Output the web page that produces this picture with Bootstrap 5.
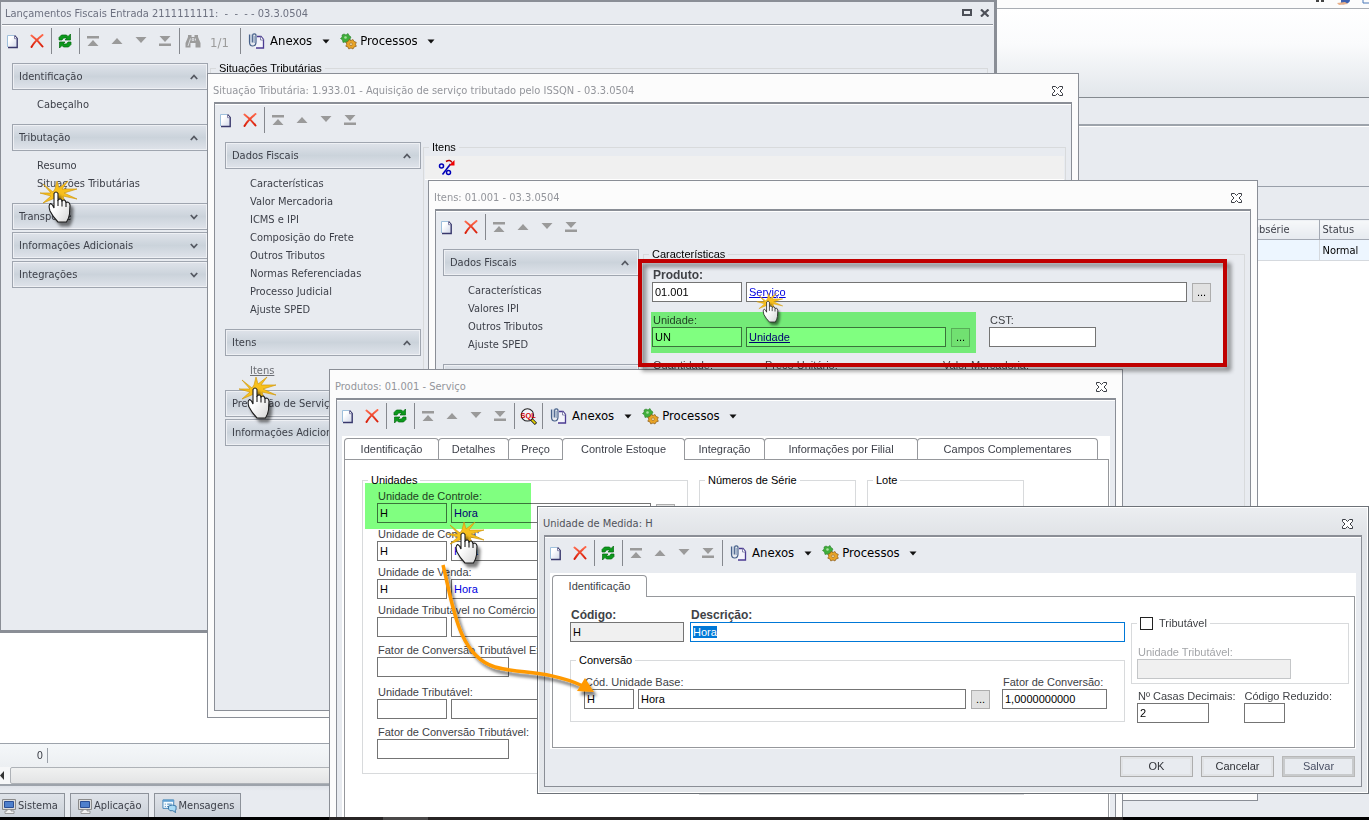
<!DOCTYPE html>
<html lang="pt-BR">
<head>
<meta charset="utf-8">
<meta name="viewport" content="width=device-width, initial-scale=1">
<title>Lançamentos Fiscais</title>
<link href="https://cdn.jsdelivr.net/npm/bootstrap@5.3.0/dist/css/bootstrap.min.css" rel="stylesheet">
<style>
:root{--face:#e8ebf0;--frame:#8a8e96;--ui:"DejaVu Sans Condensed","DejaVu Sans",sans-serif;--form:"Liberation Sans",Arial,sans-serif}
body{font:11px/13px var(--ui);color:#3c3f48;background:#000;overflow:hidden}
button{font:inherit;color:inherit;background:none;border:0;padding:0}
.desk{height:calc(100vh - 3px);overflow:hidden;background:#fff}
.taskline{height:3px;background:linear-gradient(90deg,#000 329px,#272424 329px 383px,#4a4848 383px 428px,#272424 428px 1123px,#000 1123px)}
/* background application */
.app-quick{height:9px;background:#fcfcfc;border-bottom:1px solid #a9adb3}
.app-ribbon{height:89px;background:linear-gradient(#fff,#fafbfc 40%,#e2e6eb);border-bottom:1px solid #858a90}
.app-caption{height:28px;background:var(--face);border-bottom:2px solid #9da3ab;margin-bottom:1px}
.app-band{height:60px;background:var(--face);border-bottom:1px solid #999fa9}
.app-band2{height:32px;background:var(--face)}
.grid-tbl{table-layout:fixed;border-collapse:collapse}
.grid-tbl th,.grid-tbl td{height:20px;padding:0 3px;border:1px solid #a3a9b3;border-width:1px 0 1px 1px;font-weight:400;white-space:nowrap}
.grid-tbl th{background:linear-gradient(#f6f8fa,#e6eaef)}
.grid-tbl td{height:21px;background:#edf6ff;border-color:#d5d9de;color:#000}
.c-sub{width:76px}.c-sta{width:50px}
.app-count{height:24px;border-top:1px solid #9da3ab;background:linear-gradient(#f4f7f9,#eceff2)}
.app-count span{width:48px;height:15px;border-right:1px solid #9aa0a8;padding-right:4px;line-height:16px}
.app-scroll{height:17px;background:#f6f7f8}
.app-scroll .thumb{border:1px solid #aeb2b7;border-radius:2px;background:linear-gradient(#f0f1f1,#e3e4e5)}
.app-tabs{height:33px;gap:5px;border-top:2px solid #9da3ab;background:linear-gradient(#dfe3e9,var(--face) 5px);padding-top:7px}
.app-tabs button{height:24px;gap:2px;border:1px solid #8d929a;border-bottom:0;background:linear-gradient(#dfe3e9,#cbd1d9);padding:0 6px 0 7px}
.app-tabs button:first-child{border-left:0;padding-left:2px}
/* windows */
.win{position:absolute;border:1px solid var(--frame);background:#fcfcfc;padding:0 6px 6px}
.win-title{height:28px;flex:none;color:#93959b;margin-left:-1px;padding:5px 9px 0 0;white-space:nowrap}
.win-body{border:1px solid var(--frame);border-top-width:2px;background:var(--face);box-shadow:inset 0 1px #fff;padding-top:1px;min-height:0;flex:1;overflow:hidden}
.w1{left:0;right:372px;top:0;bottom:184px;border-width:2px 3px 3px 1px;background:var(--face);padding:0}
.w1 .win-title{height:22px;margin:0;color:#6d7180;padding:0 0 0 4px}
.w1 .win-body{border:0;border-top:1px solid #90959d;margin-left:1px;margin-right:1px}
.w2{left:207px;right:290px;top:73px;bottom:99px}
.w3{left:428px;right:111px;top:180px;bottom:16px}
.w4{left:329px;right:246px;top:369px;bottom:0;border-bottom:0;padding-bottom:0}
.w4 .win-body{border-bottom:0}
.w5{left:537px;right:0;top:506px;background:linear-gradient(#eceef1,#e0e3e7 28px,#e5e8ec);border-color:#6d7278;box-shadow:inset 0 0 0 1px #fff}
.w5 .win-title{color:#50525a}
/* toolbar */
.tools{height:30px;padding-top:2px}
.tools>button{width:24px;height:26px;display:flex;align-items:center;justify-content:center}
.tools>button:first-child{width:23px}
.tools>i{width:1px;height:26px;margin:0 1px 0 2px;background:#85888e}
.tools>span{width:33px;padding-left:5px;font-size:13px;color:#9c9c9c}
.tools>button.menu{width:auto;font-size:13px;line-height:16px;color:#000;padding-left:6px;padding-right:4px}
.menu svg:first-child{margin-right:5px}.menu svg:last-child{margin-left:10px}
.menu+.menu svg:first-child{margin-right:3px}.menu+.menu svg:last-child{margin-left:9px}
/* side navigation */
.side{width:196px;flex:none;margin-top:1px;font-family:var(--ui)}
.side>button{height:27px;width:100%;border:1px solid #9fa5af;box-shadow:inset 0 0 0 1px #eef0f4;background:linear-gradient(#dfe3ea,#cbd3db 50%,#dfe3ea);padding:0 9px 0 6px;margin-bottom:2px;display:flex;align-items:center;justify-content:space-between}
.side ul{margin:6px 0 10px;padding:0 0 0 25px;list-style:none}
.side a{display:block;line-height:18px;color:#3c3f48;text-decoration:none}
.side a.here{text-decoration:underline;color:#6c6e74}
.b2{padding:6px 5px 0 10px;gap:2px}.b3{padding:6px 5px 0 7px}
.strip{height:24px;background:#f0f0f0;border-bottom:1px solid #fff;margin:2px 1px 0;padding-left:13px}
.list-box{border-left:1px solid #000;margin:33px 4px 0}
/* forms */
.frm{font-family:var(--form)}
.frm fieldset{border:1px solid #d8dadc;padding:0}
.frm legend{float:none;width:auto;margin:0 0 0 5px;padding:0 3px;font-size:11px;line-height:13px;color:#000}
.frm label{display:block;line-height:13px;white-space:nowrap;padding-left:1px;color:#404246}
.frm input[type=text]{display:block;height:20px;width:100%;border:1px solid #747474;border-radius:0;background:#fff;padding:0 2px;font:11px/18px var(--form);color:#000;outline:0}
.frm input.lnk{color:#0000e0}.frm input.und{text-decoration:underline}
.frm input[readonly].off{background:#f0f0f0}
.frm input:disabled{background:#f0f0f0;border-color:#c4c6c8}
.frm b{font-size:12px}
.dots{width:19px;height:19px;flex:none;border:1px solid #adadad;background:#e1e1e1;line-height:15px;color:#000;margin:1px 0 0 1px}
.gp4{gap:4px}.k90{width:90px;flex:none}.k200{width:200px;flex:none}.k107{width:107px;flex:none}.k112{width:112px}.k178{width:178px}.k70{width:70px;flex:none}.k132{width:132px}.k50{width:50px;flex:none}.k114{width:114px;flex:none}.k72{width:72px}.k41{width:41px}
.cst{margin-left:19px}
.mark-green{position:absolute;background:#80ff80;mix-blend-mode:multiply}
.mg-a{left:-1px;top:-2px;width:325px;height:41px}
.mg-b{left:2px;top:-4px;width:166px;height:46px}
.frm .char{padding:8px 33px 0 8px;margin-left:4px}
.char>legend{margin-left:-3px}
.tabbed{background:#fff;padding:2px 1px 1px 2px;margin:5px 5px 0}
.w4 .tabbed{padding-bottom:0}
.tab-row{height:22px;position:relative;margin-bottom:-1px;z-index:1}
.tab-row button{height:21px;border:1px solid #96989c;border-bottom:0;border-radius:4px 4px 0 0;margin-right:-1px;background:#fff;color:#3c3f48;white-space:nowrap}
.tab-row .on{height:22px}
.tab-pg{border:1px solid #96989c;background:#fff}
.pg4{padding:14px 16px 0 17px;gap:11px;border-bottom:0}
.pg5{padding:12px 5px 24px 17px;gap:6px}
.t94{width:95px}.t71{width:71px}.t55{width:55px}.t123{width:123px}.t81{width:81px}.t154{width:154px}.t181{width:181px}
.frm .uni{width:326px;flex:none;padding:0 10px 14px 14px}
.frm .uni>legend{margin-left:-9px}
.uni .frow{margin-bottom:5px}.uni .frow:first-of-type{padding-top:3px}.uni .g7{margin-bottom:7px}.uni .g9{margin-bottom:9px}
.box156{width:157px;height:50px}.box-low{height:271px}
.act{padding:7px 6px 9px}
.act button{width:73px;height:21px;border:1px solid #adadad;box-shadow:inset 0 0 0 2px #e1e3e6;background:#e8ebf0;font-family:var(--form);margin-left:8px;color:#303238}
.act button.def{border-color:#b8b8b8;box-shadow:inset 0 0 0 2px #c8cacc;color:#4a5064}
.frm .conv{padding:9px 17px 12px 13px}
.conv>legend{margin-left:-8px}
.fator{width:105px;flex:none;margin-left:12px}
.frm .trib{padding:16px 57px 4px 5px}
.trib>legend{margin-left:0}
.frm .dim{color:#a3a5a8}
.rcol{width:218px;flex:none;margin-top:8px}
.rrow{margin:6px 0 0 6px;gap:8px}
.frm input[type=checkbox]{appearance:none;width:13px;height:13px;border:1px solid #222;background:#fff;margin:0 6px 0 0}
#desc{border-color:#0078d7}
#desc::selection{background:#0078d7;color:#fff}
.red-mark{position:absolute;left:638px;right:142px;top:259px;height:108px;border:4px solid #c00000;filter:drop-shadow(4px 4px 2px rgba(0,0,0,.45));pointer-events:none}
.notes{position:absolute;left:0;top:0;width:100%;height:100%;pointer-events:none}
</style>
</head>
<body>
<svg width="0" height="0" class="position-absolute">
<defs>
<linearGradient id="gp" x1="0" y1="0" x2="1" y2="1"><stop offset=".3" stop-color="#fff"/><stop offset="1" stop-color="#cfd6e8"/></linearGradient>
<linearGradient id="gh" x1="0" y1="0" x2="1" y2="1"><stop offset=".4" stop-color="#fff"/><stop offset="1" stop-color="#d4d4d4"/></linearGradient>
<linearGradient id="gx" x1="0" y1="0" x2="0" y2="1"><stop offset="0" stop-color="#ff6a4c"/><stop offset="1" stop-color="#d81c08"/></linearGradient>
<filter id="sh" x="-50%" y="-50%" width="220%" height="220%"><feDropShadow dx="3" dy="4" stdDeviation="1.6" flood-opacity=".5"/></filter>
<symbol id="doc" viewBox="1 0 14 16"><path d="M1.500 2.500h6.500l3 3v9h-9.500z" fill="url(#gp)"/><path d="M1.500 14V2.500h6.500" fill="none" stroke="#9fc0dc"/><path d="M8.500 2.500l2.700 3V14.500H2" fill="none" stroke="#38386c" stroke-width="1.400"/><path d="M8.500 3v2.700h2.500" fill="#fff" stroke="#6a6a98" stroke-width=".8"/></symbol>
<symbol id="del" viewBox="0 0 14 14"><path d="M1.500 1.500C5 4 9 8 12.500 12.500M12.500 1C8 4.500 4 8.500 1.500 13" fill="none" stroke="url(#gx)" stroke-width="2" stroke-linecap="round"/></symbol>
<symbol id="ref" viewBox="0 0 14 16"><path d="M1 7V4.500L3.500 2h5L10 3.500 12.500 1v6H7l2-2H5.500L4 7z" fill="#0c9a1c" stroke="#056810" stroke-width=".7"/><path d="M13 9v2.500L10.500 14h-5L4 12.500 1.500 15V9H7l-2 2h3.500L10 9z" fill="#0c9a1c" stroke="#056810" stroke-width=".7"/></symbol>
<symbol id="fst" viewBox="0 0 12 12"><path d="M0 1h12v2.500H0zM6 5l5.500 6H.5z" fill="#9a9a9a"/></symbol>
<symbol id="up" viewBox="0 0 12 12"><path d="M6 3l5.500 6H.5z" fill="#9a9a9a"/></symbol>
<symbol id="dn" viewBox="0 0 12 12"><path d="M6 8L.5 2h11z" fill="#9a9a9a"/></symbol>
<symbol id="lst" viewBox="0 0 12 12"><path d="M0 8.500h12V11H0zM6 7L.5 1h11z" fill="#9a9a9a"/></symbol>
<symbol id="bin" viewBox="0 0 16 14"><path d="M3 1h3.500v2h3V1H13v2l2.500 6v4.500h-5V9h-5v4.500H.500V9L3 3z" fill="#9c9c9c"/><path d="M5.500 4.500L3 12M10.500 4.500v2M7.200 4.500h1.600v2H7.200z" stroke="#e8ebf0" stroke-width=".8" fill="none"/></symbol>
<symbol id="clip" viewBox="0 0 17 16"><path d="M8 3.500h5l2.500 3v8.500H7z" fill="#f4f4fb"/><path d="M9 3.500h4l2.500 3V15H8" fill="none" stroke="#4b3b92" stroke-width="1.300"/><path d="M12.500 3.500V7h3" fill="#fff" stroke="#6a6a98" stroke-width=".8"/><path d="M1.500 1.500v7.500q0 4 3.200 4t3.300-4V2.500Q8 .8 6.300.8T4.700 2.500v7" fill="none" stroke="#47618a" stroke-width="1.200"/><path d="M3.100 1.500v8M6.300 3v7" stroke="#8aa0c0" stroke-width=".9"/></symbol>
<symbol id="gear" viewBox="0 0 17 17"><path d="M4 1l2 1 2-1.500 1 2L11 4l-1 2 .5 2-2 .500L7 10 5 9 3 9.500 2.500 7 .5 5.500 2.200 4 2 2z" fill="#3fae3a" stroke="#2c7e2c" stroke-width=".6"/><circle cx="5.500" cy="4.500" r="1.300" fill="#a8e0a0"/><path d="M9 6.500l2 1 2-1 1 2 2.300.8-.8 2 .8 2-2.300.700-1 2-2-1-2.200 1L8 14l-2.200-.8 1-2-.8-2L8 8.500z" fill="#e9a426" stroke="#8a5a18" stroke-width=".7"/><circle cx="11" cy="11.200" r="1.400" fill="#f0d8a0" stroke="#8a5410" stroke-width=".5"/></symbol>
<symbol id="car" viewBox="0 0 8 5"><path d="M.5.5h7L4 4.500z" fill="#111"/></symbol>
<symbol id="sql" viewBox="0 0 16 16"><path d="M10 10l5 5" stroke="#222" stroke-width="3"/><path d="M11 11l3.500 3.500" stroke="#e8d400" stroke-width="1.500"/><circle cx="7" cy="6.500" r="5.800" fill="#f2f4fa" stroke="#222"/><text x="0.500" y="9" font-family="Liberation Sans" font-size="7" font-weight="700" fill="#d00000">SQL</text></symbol>
<symbol id="chu" viewBox="0 0 8 6"><path d="M.8 5L4 1.500 7.200 5" fill="none" stroke="#555962" stroke-width="1.800"/></symbol>
<symbol id="chd" viewBox="0 0 8 6"><path d="M.8 1L4 4.500 7.200 1" fill="none" stroke="#555962" stroke-width="1.800"/></symbol>
<symbol id="cls" viewBox="0 0 11 10"><path d="M.5.5h3l2 2L7.500.5h3v2L8 5l2.500 2.500v2h-3l-2-2-2 2h-3v-2L3 5 .5 2.500z" fill="#fff" stroke="#3a3d44" stroke-width="1"/></symbol>
<symbol id="pct" viewBox="0 0 17 17"><path d="M12.500 5L4.500 15.500" stroke="#0000b8" stroke-width="1.600"/><circle cx="3.500" cy="7" r="2" fill="none" stroke="#0000b8" stroke-width="1.500"/><circle cx="10.500" cy="13.500" r="2" fill="none" stroke="#0000b8" stroke-width="1.500"/><path d="M8 2.500q4-2.500 6 1" fill="none" stroke="#b00000" stroke-width="1.500"/><path d="M16.500 1v5.500H11z" fill="#f00000"/></symbol>
<symbol id="pc" viewBox="0 0 14 16"><path d="M.5 1.500h13v10H.5z" fill="#dcdcdc" stroke="#8a8a8a"/><path d="M2.500 3.500h9V9.500h-9z" fill="#4f80cc" stroke="#2b4f94"/><path d="M5 11.500h4V13h3v2.500H3V13h2z" fill="#f0f0f0" stroke="#888" stroke-width=".8"/></symbol>
<symbol id="msg" viewBox="0 0 16 16"><path d="M1 1.500h11.500v9H1z" fill="#f4fbff" stroke="#3b7fb5"/><path d="M1 1.500h11.500v2H1z" fill="#5fa0d2"/><path d="M3 6h1M5.500 6h5M3 8.500h1M5.500 8.500h3" stroke="#3b7fb5"/><path d="M7 8q4-2 8 0v4l-1 .5.500 2.500-3-2h-3Q6 12 7 8z" fill="#a9dbf5" stroke="#2c6a9c" stroke-width=".9"/></symbol>
<g id="hand">
<path d="M-1-3L1-11l2 7 9-7-6 8 15 0-13 4 13 6-14-3 3 9-7-7-5 9 1-9-12 5 8-7-11-3 11 0-8-9 10 8z" fill="#f8c01c" stroke="#d09a10" stroke-width=".7"/>
<path filter="url(#sh)" d="M-2 1.500Q0-1.500 2 1.500V8Q5 5.500 6 9 9 6.500 10 10.500 13 9 14 13L13.500 22Q13 26 10.500 30H2Q-3 25-6 19-8 13-5.500 11.500-3.500 12-2 16z" fill="url(#gh)" stroke="#1c1c1c" stroke-width="1.100"/>
<path d="M2 8v6M6 9v5.500M10 10.500V15" stroke="#1c1c1c" stroke-width="1.100" fill="none"/>
</g>
</defs>
</svg>

<main class="desk position-relative">
<div class="h-100 d-flex flex-column">
  <div class="app-quick flex-shrink-0 d-flex justify-content-end"><svg width="60" height="5"><path d="M7 0h3v2H7zM12 0h3v2h-3z" fill="#444"/><path d="M32 0h9q0 3-5 4t-4-2z" fill="#3f62b0"/><path d="M28 3l8-1 3 2-9 1z" fill="#e8b08a"/><path d="M54 0v3h6" stroke="#4a78b8" fill="none"/></svg></div>
  <div class="app-ribbon flex-shrink-0"></div>
  <div class="app-caption flex-shrink-0"></div>
  <div class="app-band flex-shrink-0"></div>
  <div class="app-band2 flex-shrink-0"></div>
  <div class="flex-grow-1">
    <table class="grid-tbl w-100"><colgroup><col><col class="c-sub"><col class="c-sta"></colgroup>
    <thead><tr><th></th><th>Subsérie</th><th>Status</th></tr></thead><tbody><tr><td></td><td></td><td>Normal</td></tr></tbody></table>
  </div>
  <div class="app-count flex-shrink-0 d-flex align-items-center"><span class="text-end">0</span></div>
  <div class="app-scroll flex-shrink-0 d-flex"><svg width="10" height="17"><path d="M4 4v9L0 8.500z" fill="#333"/></svg><div class="thumb flex-grow-1 my-0"></div></div>
  <nav class="app-tabs flex-shrink-0 d-flex">
    <button class="d-flex align-items-center"><svg width="14" height="16"><use href="#pc"/></svg>Sistema</button>
    <button class="d-flex align-items-center"><svg width="14" height="16"><use href="#pc"/></svg>Aplicação</button>
    <button class="d-flex align-items-center"><svg width="15" height="16"><use href="#msg"/></svg>Mensagens</button>
  </nav>
</div>

<section class="win w1 d-flex flex-column">
  <header class="win-title d-flex align-items-center justify-content-between"><span>Lançamentos Fiscais Entrada 2111111111: &nbsp;- &nbsp;- &nbsp;- - 03.3.0504</span>
    <span class="d-flex align-items-center"><button class="d-flex me-2" aria-label="Maximizar"><svg width="10" height="8"><path d="M1 1h8v5H1z" fill="none" stroke="#4d5058" stroke-width="2"/></svg></button><button class="d-flex me-1" aria-label="Fechar"><svg width="10" height="8"><path d="M1 .5l7.500 7M8.500.5L1 7.500" stroke="#4d5058" stroke-width="2.200"/></svg></button></span></header>
  <div class="win-body">
    <div class="tools d-flex">
      <button aria-label="Novo"><svg width="14" height="16"><use href="#doc"/></svg></button><button aria-label="Excluir"><svg width="14" height="14"><use href="#del"/></svg></button><i></i>
      <button aria-label="Atualizar"><svg width="14" height="16"><use href="#ref"/></svg></button><i></i>
      <button aria-label="Primeiro"><svg width="12" height="12"><use href="#fst"/></svg></button><button aria-label="Anterior"><svg width="12" height="12"><use href="#up"/></svg></button><button aria-label="Próximo"><svg width="12" height="12"><use href="#dn"/></svg></button><button aria-label="Último"><svg width="12" height="12"><use href="#lst"/></svg></button><i></i>
      <button aria-label="Localizar"><svg width="16" height="14"><use href="#bin"/></svg></button><span class="align-self-center">1/1</span><i></i>
      <button class="menu"><svg width="17" height="16"><use href="#clip"/></svg>Anexos<svg width="8" height="5"><use href="#car"/></svg></button>
      <button class="menu"><svg width="17" height="17"><use href="#gear"/></svg>Processos<svg width="8" height="5"><use href="#car"/></svg></button>
    </div>
    <div class="b2 d-flex frm h-100">
      <nav class="side">
        <button>Identificação<svg width="8" height="6"><use href="#chu"/></svg></button>
        <ul><li><a href="#">Cabeçalho</a></li></ul>
        <button>Tributação<svg width="8" height="6"><use href="#chu"/></svg></button>
        <ul><li><a href="#">Resumo</a></li><li><a href="#">Situações Tributárias</a></li></ul>
        <button>Transporte<svg width="8" height="6"><use href="#chd"/></svg></button>
        <button>Informações Adicionais<svg width="8" height="6"><use href="#chd"/></svg></button>
        <button>Integrações<svg width="8" height="6"><use href="#chd"/></svg></button>
      </nav>
      <fieldset class="flex-grow-1"><legend>Situações Tributárias</legend></fieldset>
    </div>
  </div>
</section>

<section class="win w2 d-flex flex-column">
  <header class="win-title d-flex align-items-center justify-content-between"><span>Situação Tributária: 1.933.01 - Aquisição de serviço tributado pelo ISSQN - 03.3.0504</span><button class="d-flex" aria-label="Fechar"><svg width="11" height="10"><use href="#cls"/></svg></button></header>
  <div class="win-body d-flex flex-column">
    <div class="tools d-flex">
      <button aria-label="Novo"><svg width="14" height="16"><use href="#doc"/></svg></button><button aria-label="Excluir"><svg width="14" height="14"><use href="#del"/></svg></button><i></i>
      <button aria-label="Primeiro"><svg width="12" height="12"><use href="#fst"/></svg></button><button aria-label="Anterior"><svg width="12" height="12"><use href="#up"/></svg></button><button aria-label="Próximo"><svg width="12" height="12"><use href="#dn"/></svg></button><button aria-label="Último"><svg width="12" height="12"><use href="#lst"/></svg></button>
    </div>
    <div class="b2 d-flex frm flex-grow-1">
      <nav class="side">
        <button>Dados Fiscais<svg width="8" height="6"><use href="#chu"/></svg></button>
        <ul><li><a href="#">Características</a></li><li><a href="#">Valor Mercadoria</a></li><li><a href="#">ICMS e IPI</a></li><li><a href="#">Composição do Frete</a></li><li><a href="#">Outros Tributos</a></li><li><a href="#">Normas Referenciadas</a></li><li><a href="#">Processo Judicial</a></li><li><a href="#">Ajuste SPED</a></li></ul>
        <button>Itens<svg width="8" height="6"><use href="#chu"/></svg></button>
        <ul><li><a href="#" class="here">Itens</a></li></ul>
        <button>Prestação de Serviço<svg width="8" height="6"><use href="#chd"/></svg></button>
        <button>Informações Adicionais<svg width="8" height="6"><use href="#chd"/></svg></button>
      </nav>
      <fieldset class="flex-grow-1 d-flex flex-column"><legend>Itens</legend>
        <div class="strip d-flex align-items-center"><svg width="17" height="17"><use href="#pct"/></svg></div>
        <div class="list-box flex-grow-1"></div>
      </fieldset>
    </div>
  </div>
</section>

<section class="win w3 d-flex flex-column">
  <header class="win-title d-flex align-items-center justify-content-between"><span>Itens: 01.001 - 03.3.0504</span><button class="d-flex" aria-label="Fechar"><svg width="11" height="10"><use href="#cls"/></svg></button></header>
  <div class="win-body d-flex flex-column">
    <div class="tools d-flex">
      <button aria-label="Novo"><svg width="14" height="16"><use href="#doc"/></svg></button><button aria-label="Excluir"><svg width="14" height="14"><use href="#del"/></svg></button><i></i>
      <button aria-label="Primeiro"><svg width="12" height="12"><use href="#fst"/></svg></button><button aria-label="Anterior"><svg width="12" height="12"><use href="#up"/></svg></button><button aria-label="Próximo"><svg width="12" height="12"><use href="#dn"/></svg></button><button aria-label="Último"><svg width="12" height="12"><use href="#lst"/></svg></button>
    </div>
    <div class="b3 d-flex frm flex-grow-1">
      <nav class="side">
        <button>Dados Fiscais<svg width="8" height="6"><use href="#chu"/></svg></button>
        <ul><li><a href="#">Características</a></li><li><a href="#">Valores IPI</a></li><li><a href="#">Outros Tributos</a></li><li><a href="#">Ajuste SPED</a></li></ul>
        <button>&nbsp;</button>
      </nav>
      <fieldset class="flex-grow-1 char"><legend>Características</legend>
        <label for="prod"><b>Produto:</b></label>
        <div class="d-flex gp4 mb-2 pb-1"><div class="k90"><input type="text" id="prod" value="01.001"></div><input type="text" class="lnk und" value="Serviço" aria-label="Nome do produto"><button class="dots">...</button></div>
        <div class="d-flex position-relative mb-2 pb-1">
          <div><label for="un">Unidade:</label><div class="d-flex gp4"><div class="k90"><input type="text" id="un" value="UN"></div><div class="k200"><input type="text" class="lnk und" value="Unidade" aria-label="Nome da unidade"></div><button class="dots">...</button></div></div>
          <div class="k107 cst"><label for="cst">CST:</label><input type="text" id="cst"></div>
          <div class="mark-green mg-a"></div>
        </div>
        <div class="d-flex"><label class="k112">Quantidade:</label><label class="k178">Preço Unitário:</label><label>Valor Mercadoria:</label></div>
      </fieldset>
    </div>
  </div>
</section>

<section class="win w4 d-flex flex-column">
  <header class="win-title d-flex align-items-center justify-content-between"><span>Produtos: 01.001 - Serviço</span><button class="d-flex" aria-label="Fechar"><svg width="11" height="10"><use href="#cls"/></svg></button></header>
  <div class="win-body d-flex flex-column">
    <div class="tools d-flex">
      <button aria-label="Novo"><svg width="14" height="16"><use href="#doc"/></svg></button><button aria-label="Excluir"><svg width="14" height="14"><use href="#del"/></svg></button><i></i>
      <button aria-label="Atualizar"><svg width="14" height="16"><use href="#ref"/></svg></button><i></i>
      <button aria-label="Primeiro"><svg width="12" height="12"><use href="#fst"/></svg></button><button aria-label="Anterior"><svg width="12" height="12"><use href="#up"/></svg></button><button aria-label="Próximo"><svg width="12" height="12"><use href="#dn"/></svg></button><button aria-label="Último"><svg width="12" height="12"><use href="#lst"/></svg></button><i></i>
      <button aria-label="SQL"><svg width="17" height="17"><use href="#sql"/></svg></button><i></i>
      <button class="menu"><svg width="17" height="16"><use href="#clip"/></svg>Anexos<svg width="8" height="5"><use href="#car"/></svg></button>
      <button class="menu"><svg width="17" height="17"><use href="#gear"/></svg>Processos<svg width="8" height="5"><use href="#car"/></svg></button>
    </div>
    <div class="tabbed frm flex-grow-1 d-flex flex-column">
      <div class="tab-row d-flex align-items-start"><button class="t94">Identificação</button><button class="t71">Detalhes</button><button class="t55">Preço</button><button class="t123 on">Controle Estoque</button><button class="t81">Integração</button><button class="t154">Informações por Filial</button><button class="t181">Campos Complementares</button></div>
      <div class="tab-pg pg4 flex-grow-1 d-flex align-items-start">
        <fieldset class="uni position-relative"><legend>Unidades</legend>
          <div class="frow"><label for="uc">Unidade de Controle:</label><div class="d-flex gp4"><div class="k70"><input type="text" id="uc" value="H"></div><div class="k200"><input type="text" class="lnk" value="Hora" aria-label="Nome"></div><button class="dots">...</button></div></div>
          <div class="frow"><label for="up1">Unidade de Compra:</label><div class="d-flex gp4"><div class="k70"><input type="text" id="up1" value="H"></div><div class="k200"><input type="text" class="lnk" value="Hora" aria-label="Nome"></div></div></div>
          <div class="frow"><label for="uv">Unidade de Venda:</label><div class="d-flex gp4"><div class="k70"><input type="text" id="uv" value="H"></div><div class="k200"><input type="text" class="lnk" value="Hora" aria-label="Nome"></div></div></div>
          <div class="frow g7"><label for="ue">Unidade Tributável no Comércio E</label><div class="d-flex gp4"><div class="k70"><input type="text" id="ue"></div><div class="k200"><input type="text" aria-label="Nome"></div></div></div>
          <div class="frow g9"><label for="fe">Fator de Conversão Tributável Ext</label><div class="k132"><input type="text" id="fe"></div></div>
          <div class="frow g7"><label for="ut">Unidade Tributável:</label><div class="d-flex gp4"><div class="k70"><input type="text" id="ut"></div><div class="k200"><input type="text" aria-label="Nome"></div></div></div>
          <div><label for="ft">Fator de Conversão Tributável:</label><div class="k132"><input type="text" id="ft"></div></div>
          <div class="mark-green mg-b"></div>
        </fieldset>
        <div class="d-flex flex-column"><div class="d-flex" style="gap:11px"><fieldset class="box156"><legend>Números de Série</legend></fieldset><fieldset class="box156"><legend>Lote</legend></fieldset></div>
        <fieldset class="box-low"></fieldset></div>
      </div>
    </div>
  </div>
</section>

<section class="win w5 d-flex flex-column">
  <header class="win-title d-flex align-items-center justify-content-between"><span>Unidade de Medida: H</span><button class="d-flex" aria-label="Fechar"><svg width="11" height="10"><use href="#cls"/></svg></button></header>
  <div class="win-body">
    <div class="tools d-flex">
      <button aria-label="Novo"><svg width="14" height="16"><use href="#doc"/></svg></button><button aria-label="Excluir"><svg width="14" height="14"><use href="#del"/></svg></button><i></i>
      <button aria-label="Atualizar"><svg width="14" height="16"><use href="#ref"/></svg></button><i></i>
      <button aria-label="Primeiro"><svg width="12" height="12"><use href="#fst"/></svg></button><button aria-label="Anterior"><svg width="12" height="12"><use href="#up"/></svg></button><button aria-label="Próximo"><svg width="12" height="12"><use href="#dn"/></svg></button><button aria-label="Último"><svg width="12" height="12"><use href="#lst"/></svg></button><i></i>
      <button class="menu"><svg width="17" height="16"><use href="#clip"/></svg>Anexos<svg width="8" height="5"><use href="#car"/></svg></button>
      <button class="menu"><svg width="17" height="17"><use href="#gear"/></svg>Processos<svg width="8" height="5"><use href="#car"/></svg></button>
    </div>
    <div class="tabbed frm">
      <div class="tab-row d-flex align-items-start"><button class="t94 on">Identificação</button></div>
      <div class="tab-pg pg5 d-flex">
        <div class="flex-grow-1">
          <div class="d-flex mb-2 pb-1" style="gap:6px">
            <div class="k114"><label for="cod"><b>Código:</b></label><input type="text" class="off" id="cod" value="H" readonly></div>
            <div class="flex-grow-1"><label for="desc"><b>Descrição:</b></label><input type="text" id="desc" value="Hora"></div>
          </div>
          <fieldset class="conv"><legend>Conversão</legend>
            <div class="d-flex align-items-end">
              <div class="flex-grow-1"><label for="cub">Cód. Unidade Base:</label><div class="d-flex gp4"><div class="k50"><input type="text" id="cub" value="H"></div><input type="text" value="Hora" aria-label="Nome da unidade base"><button class="dots">...</button></div></div>
              <div class="fator"><label for="fc">Fator de Conversão:</label><input type="text" id="fc" value="1,0000000000"></div>
            </div>
          </fieldset>
        </div>
        <div class="rcol">
          <fieldset class="trib"><legend><label for="tb" class="d-flex align-items-center m-0 p-0"><input type="checkbox" id="tb">Tributável</label></legend>
            <label for="utb" class="dim">Unidade Tributável:</label><input type="text" id="utb" disabled></fieldset>
          <div class="rrow d-flex"><div><label for="ncd">Nº Casas Decimais:</label><div class="k72"><input type="text" id="ncd" value="2"></div></div><div><label for="cr">Código Reduzido:</label><div class="k41"><input type="text" id="cr"></div></div></div>
        </div>
      </div>
    </div>
    <div class="act d-flex justify-content-end"><button>OK</button><button>Cancelar</button><button class="def">Salvar</button></div>
  </div>
</section>

<div class="red-mark"></div>
<svg class="notes" aria-hidden="true">
  <use href="#hand" x="56" y="192"/><use href="#hand" x="255" y="388"/><use href="#hand" x="463" y="533"/>
  <use href="#hand" transform="translate(768 301) scale(.7)"/>
  <g filter="url(#sh)"><path d="M443 565C452 600 457 656 495 667 520 674 548 670 583 686" fill="none" stroke="#ff9900" stroke-width="3.500"/><path d="M577 691l8-13 9 14z" fill="#ff9900"/></g>
</svg>
</main>
<div class="taskline"></div>
<script src="https://cdn.jsdelivr.net/npm/bootstrap@5.3.0/dist/js/bootstrap.bundle.min.js"></script>
<script>const d=document.getElementById('desc');d.focus();d.select();</script>
</body>
</html>
